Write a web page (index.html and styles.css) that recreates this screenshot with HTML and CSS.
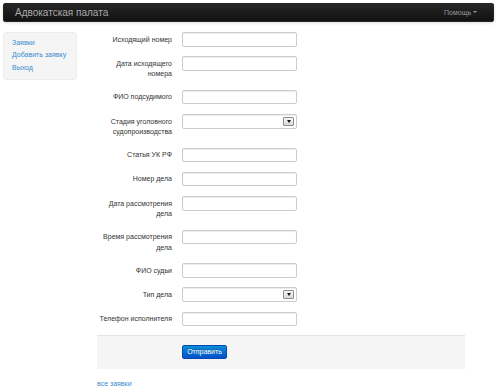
FILE: index.html
```html
<!DOCTYPE html>
<html lang="ru">
<head>
  <meta charset="UTF-8" />
  <title>Адвокатская палата — Добавить заявку</title>
  <link rel="stylesheet" href="styles.css">
</head>
<body>

<div class="navbar">
  <span class="brand">Адвокатская палата</span>
  <span class="help">Помощь <b class="caret"></b></span>
</div>

<div class="layout">

  <!-- Sidebar -->
  <div class="well sidebar">
    <a href="#">Заявки</a>
    <a href="#">Добавить заявку</a>
    <a href="#">Выход</a>
  </div>

  <div class="main">
    <form class="form-horizontal">
      <div class="control-group">
        <label class="control-label" for="outNum">Исходящий номер</label>
        <div class="controls"><input type="text" id="outNum" /></div>
      </div>
      <div class="control-group">
        <label class="control-label" for="outDate">Дата исходящего<br>номера</label>
        <div class="controls"><input type="text" id="outDate" /></div>
      </div>
      <div class="control-group">
        <label class="control-label" for="defendant">ФИО подсудимого</label>
        <div class="controls"><input type="text" id="defendant" /></div>
      </div>
      <div class="control-group">
        <label class="control-label" for="stage">Стадия уголовного<br>судопроизводства</label>
        <div class="controls select-wrap">
          <select id="stage"><option></option></select>
          <span class="arrow"></span>
        </div>
      </div>
      <div class="control-group">
        <label class="control-label" for="article">Статья УК РФ</label>
        <div class="controls"><input type="text" id="article" /></div>
      </div>
      <div class="control-group">
        <label class="control-label" for="caseNum">Номер дела</label>
        <div class="controls"><input type="text" id="caseNum" /></div>
      </div>
      <div class="control-group">
        <label class="control-label" for="hearDate">Дата рассмотрения<br>дела</label>
        <div class="controls"><input type="text" id="hearDate" /></div>
      </div>
      <div class="control-group">
        <label class="control-label" for="hearTime">Время рассмотрения<br>дела</label>
        <div class="controls"><input type="text" id="hearTime" /></div>
      </div>
      <div class="control-group">
        <label class="control-label" for="judge">ФИО судьи</label>
        <div class="controls"><input type="text" id="judge" /></div>
      </div>
      <div class="control-group">
        <label class="control-label" for="caseType">Тип дела</label>
        <div class="controls select-wrap">
          <select id="caseType"><option></option></select>
          <span class="arrow"></span>
        </div>
      </div>
      <div class="control-group last">
        <label class="control-label" for="phone">Телефон исполнителя</label>
        <div class="controls"><input type="text" id="phone" /></div>
      </div>

      <div class="form-actions">
        <button type="button" class="btn-primary">Отправить</button>
      </div>
    </form>

    <a href="#" class="all-link">все заявки</a>
  </div>

</div>

</body>
</html>
```

FILE: styles.css
```css
body {
  margin: 0;
  padding: 3px 6px 0 3px;
  font-family: "Liberation Sans", Arial, sans-serif;
  font-size: 7px;
  line-height: 10px;
  color: #333;
  background: #fff;
}
a { color: #3a8ccf; text-decoration: none; }

.navbar {
  height: 19px;
  box-sizing: border-box;
  display: flex;
  align-items: center;
  justify-content: space-between;
  padding: 0 16px 0 11px;
  background: linear-gradient(#262626, #111);
  border: 1px solid #252525;
  border-radius: 2px;
  box-shadow: 0 1px 3px rgba(0,0,0,.15);
}
.brand { font-size: 10px; color: #a9a9a9; padding-top: 1px; }
.help { color: #999; font-size: 7px; }
.caret {
  display: inline-block;
  vertical-align: middle;
  border-top: 2px solid #999;
  border-left: 2px solid transparent;
  border-right: 2px solid transparent;
  margin-top: -1px;
}

.layout { display: flex; align-items: flex-start; margin-top: 10px; }

.well {
  background: #f5f5f5;
  border: 1px solid #ececec;
  border-radius: 3px;
}
.sidebar {
  width: 74px;
  box-sizing: border-box;
  padding: 3.5px 0 4.5px;
}
.sidebar a {
  display: block;
  padding: 1.25px 8px;
  line-height: 10px;
}

.main { margin-left: 20px; width: 368px; }

.control-group { display: flex; margin-bottom: 9.8px; }
.control-group.last { margin-bottom: 8.5px; }
.control-label {
  width: 75px;
  flex-shrink: 0;
  text-align: right;
  padding-top: 2.5px;
  line-height: 10.6px;
  white-space: nowrap;
}
.controls { margin-left: 10px; }
.controls input, .controls select {
  width: 115px;
  height: 14.5px;
  box-sizing: border-box;
  border: 1px solid #ccc;
  border-radius: 2px;
  box-shadow: inset 0 1px 1px rgba(0,0,0,.075);
  background: #fff;
  font: inherit;
  padding: 0 3px;
  margin: 0;
}
.controls select { appearance: none; -webkit-appearance: none; }

.select-wrap { position: relative; }
.select-wrap .arrow {
  position: absolute;
  right: 3px;
  top: 3px;
  width: 11px;
  height: 8.5px;
  box-sizing: border-box;
  border: 1px solid #8e8e8e;
  border-radius: 1px;
  background: linear-gradient(#f6f6f6, #d9d9d9);
  display: flex;
  align-items: center;
  justify-content: center;
}
.select-wrap .arrow::after {
  content: "";
  border-top: 3px solid #111;
  border-left: 2.5px solid transparent;
  border-right: 2.5px solid transparent;
}

.form-actions {
  background: #f5f5f5;
  border-top: 1px solid #e5e5e5;
  padding: 9.5px 0 9.5px 85px;
}
.btn-primary {
  width: 45px;
  height: 14px;
  padding: 0;
  font: inherit;
  color: #fff;
  text-shadow: 0 -1px 0 rgba(0,0,0,.25);
  background: linear-gradient(#0a8ed6, #0450c8);
  border: 1px solid #0448b0;
  border-radius: 2px;
  cursor: pointer;
}

.all-link { display: block; margin-top: 10px; line-height: 10px; }
```
